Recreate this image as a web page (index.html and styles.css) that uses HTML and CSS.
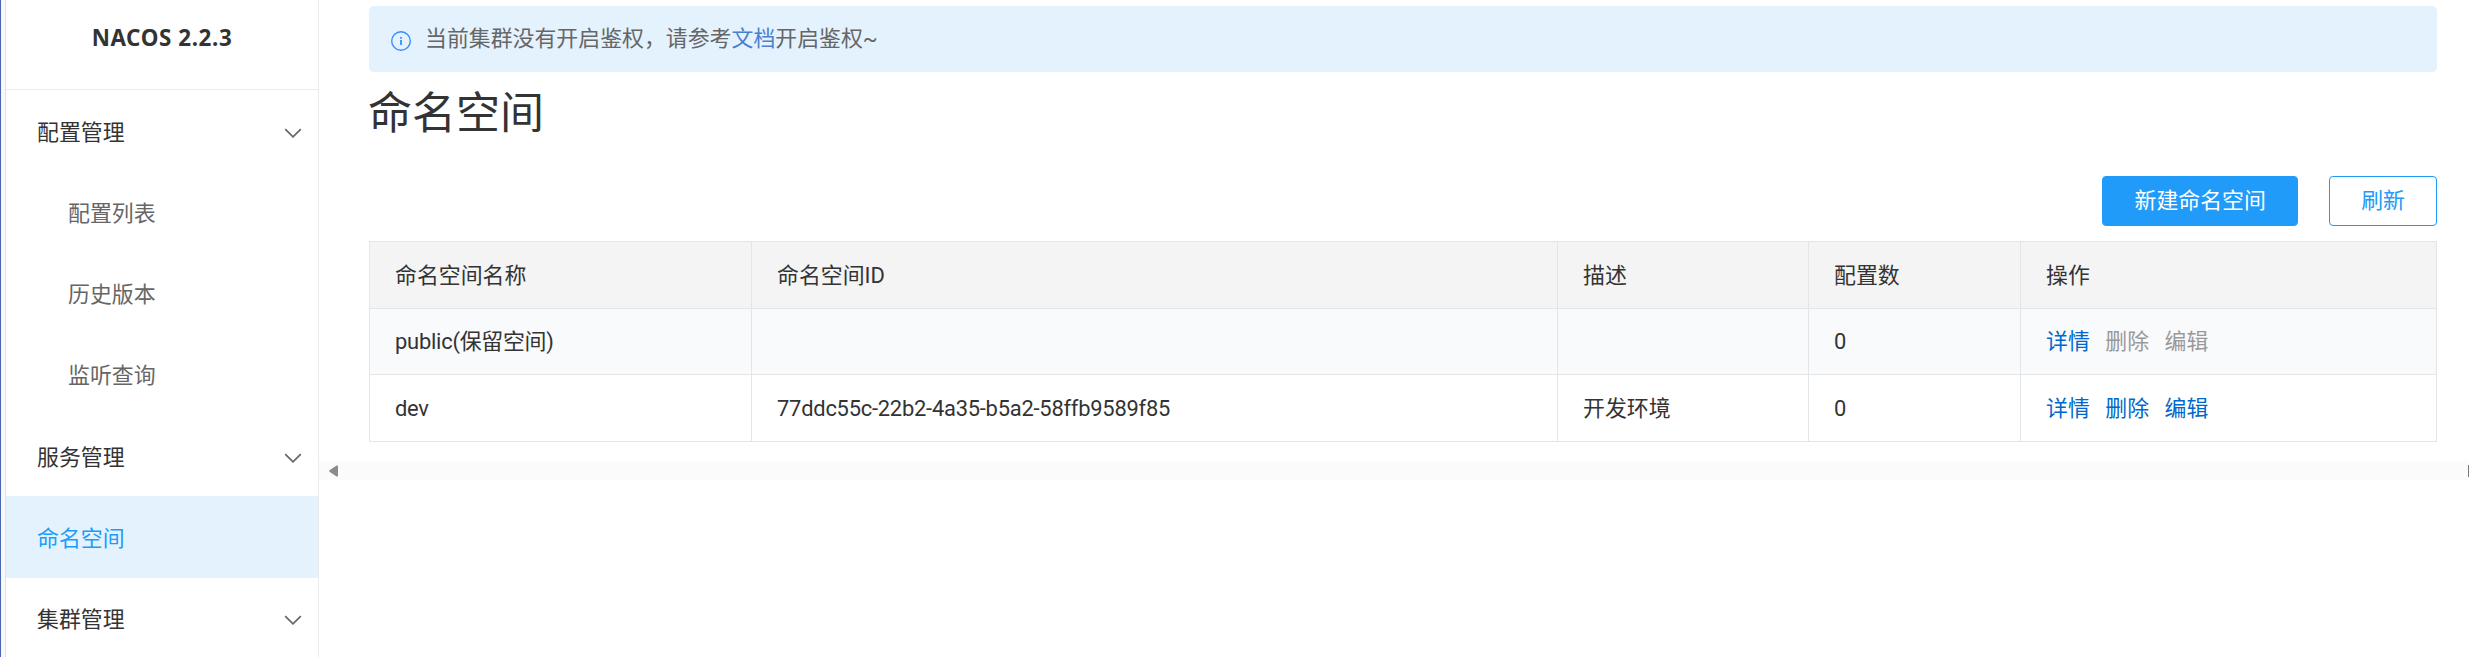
FILE: index.html
```html
<!DOCTYPE html>
<html lang="zh-CN">
<head>
<meta charset="utf-8">
<title>NACOS 命名空间</title>
<link rel="stylesheet" href="styles.css">
</head>
<body>
<div class="app">
  <div class="edge"></div>
  <nav class="sidebar">
    <h1 class="brand">NACOS 2.2.3</h1>
    <ul class="menu">
      <li class="item"><span>配置管理</span><svg class="chevron" viewBox="0 0 18 10"><path d="M1.2 1.2 9 8.8 16.8 1.2"/></svg></li>
      <li class="item sub"><span>配置列表</span></li>
      <li class="item sub"><span>历史版本</span></li>
      <li class="item sub"><span>监听查询</span></li>
      <li class="item"><span>服务管理</span><svg class="chevron" viewBox="0 0 18 10"><path d="M1.2 1.2 9 8.8 16.8 1.2"/></svg></li>
      <li class="item active"><span>命名空间</span></li>
      <li class="item"><span>集群管理</span><svg class="chevron" viewBox="0 0 18 10"><path d="M1.2 1.2 9 8.8 16.8 1.2"/></svg></li>
    </ul>
  </nav>
  <main class="main">
    <div class="content">
      <div class="notice">
        <svg class="info" viewBox="0 0 20 20"><circle cx="10" cy="10" r="9.3"/><path d="M10 6v1.7M10 9v5"/></svg>
        <p>当前集群没有开启鉴权，请参考<a>文档</a>开启鉴权~</p>
      </div>
      <h2 class="title">命名空间</h2>
      <div class="actions">
        <button class="btn primary">新建命名空间</button>
        <button class="btn">刷新</button>
      </div>
      <table class="table">
        <colgroup><col class="c-name"><col class="c-id"><col class="c-desc"><col class="c-count"><col class="c-ops"></colgroup>
        <thead>
          <tr><th>命名空间名称</th><th>命名空间ID</th><th>描述</th><th>配置数</th><th>操作</th></tr>
        </thead>
        <tbody>
          <tr class="odd"><td class="tight">public(保留空间)</td><td></td><td></td><td>0</td><td><div class="ops"><a>详情</a><a class="disabled">删除</a><a class="disabled">编辑</a></div></td></tr>
          <tr><td class="tight">dev</td><td class="tight">77ddc55c-22b2-4a35-b5a2-58ffb9589f85</td><td>开发环境</td><td>0</td><td><div class="ops"><a>详情</a><a>删除</a><a>编辑</a></div></td></tr>
        </tbody>
      </table>
    </div>
    <div class="scrollbar">
      <svg class="arrow" viewBox="0 0 9 12"><path d="M9 1.2v9.6Q9 12 7.6 11.4L.8 7Q-.4 6 .8 5L7.6.6Q9 0 9 1.2z"/></svg>
      <i class="arrow-end"></i>
    </div>
  </main>
</div>
</body>
</html>
```
FILE: styles.css
```css
* { box-sizing: border-box; }
body {
  margin: 0;
  background: #fff;
  color: #333;
  font: 21.9px/32px Roboto, "Noto Sans CJK SC", sans-serif;
}
h1, h2, p, ul { margin: 0; padding: 0; }
.app { display: flex; height: 657px; overflow: hidden; }
.edge {
  width: 6px;
  border-left: 1px solid #4666ae;
  border-right: 1px solid #e3e3e6;
  background: #f8f8fb;
}
.sidebar { width: 313px; border-right: 1px solid #ebebeb; }
.brand {
  height: 90px;
  padding-top: 22px;
  border-bottom: 1px solid #ebebeb;
  text-align: center;
  font: bold 22.4px/32px "Noto Sans", sans-serif;
  letter-spacing: 0.6px;
}
.menu { list-style: none; }
.item {
  display: flex;
  align-items: center;
  justify-content: space-between;
  height: 81.25px;
  padding: 4px 16px 0 31px;
}
.sub { padding-left: 62px; color: #666; }
.active { background: #e4f2fe; color: #209bfa; }
.chevron { width: 18px; height: 10px; }
.chevron path { fill: none; stroke: #666; stroke-width: 1.7; }
.main { flex: 1; padding-top: 6px; }
.content { height: 455px; padding: 0 32px 0 50px; }
.notice {
  display: flex;
  align-items: center;
  height: 66px;
  padding-left: 22px;
  border-radius: 5px;
  background: #e4f2fe;
  color: #666;
}
.notice a { color: #4a80cf; }
.info { width: 20px; height: 20px; margin: 3px 14px 0 0; }
.info circle, .info path { fill: none; stroke: #3f8cff; stroke-width: 1.4; }
.info path { stroke-width: 1.8; }
.title { height: 104px; margin-left: -1px; padding-top: 10px; font-size: 44px; line-height: 64px; font-weight: 400; }
.actions { display: flex; justify-content: flex-end; gap: 31px; margin-bottom: 15px; }
.btn {
  height: 50px;
  padding: 0 31px;
  border: 1px solid #209bfa;
  border-radius: 4px;
  background: #fff;
  color: #209bfa;
  font: inherit;
}
.primary { width: 196px; background: #209bfa; color: #fff; }
.table { width: 2068px; table-layout: fixed; border-collapse: collapse; }
.c-name { width: 382px; }
.c-id { width: 806px; }
.c-desc { width: 251px; }
.c-count { width: 212px; }
.c-ops { width: 416px; }
th, td { height: 66.6px; padding: 2px 25px 0; border: 1px solid #e4e5e6; text-align: left; font-weight: 400; }
th { background: #f4f4f4; }
.tight { letter-spacing: -0.23px; }
.odd { background: #f9fafc; }
.ops { display: flex; gap: 15.5px; color: #0068cc; }
.disabled { color: #999; }
.scrollbar {
  display: flex;
  align-items: center;
  justify-content: space-between;
  height: 19px;
  padding: 1px 0 0 10px;
  background: #fbfbfb;
}
.arrow { width: 9px; height: 12px; fill: #8b8b8b; }
.arrow-end { width: 1px; height: 12px; background: #777; }
```
